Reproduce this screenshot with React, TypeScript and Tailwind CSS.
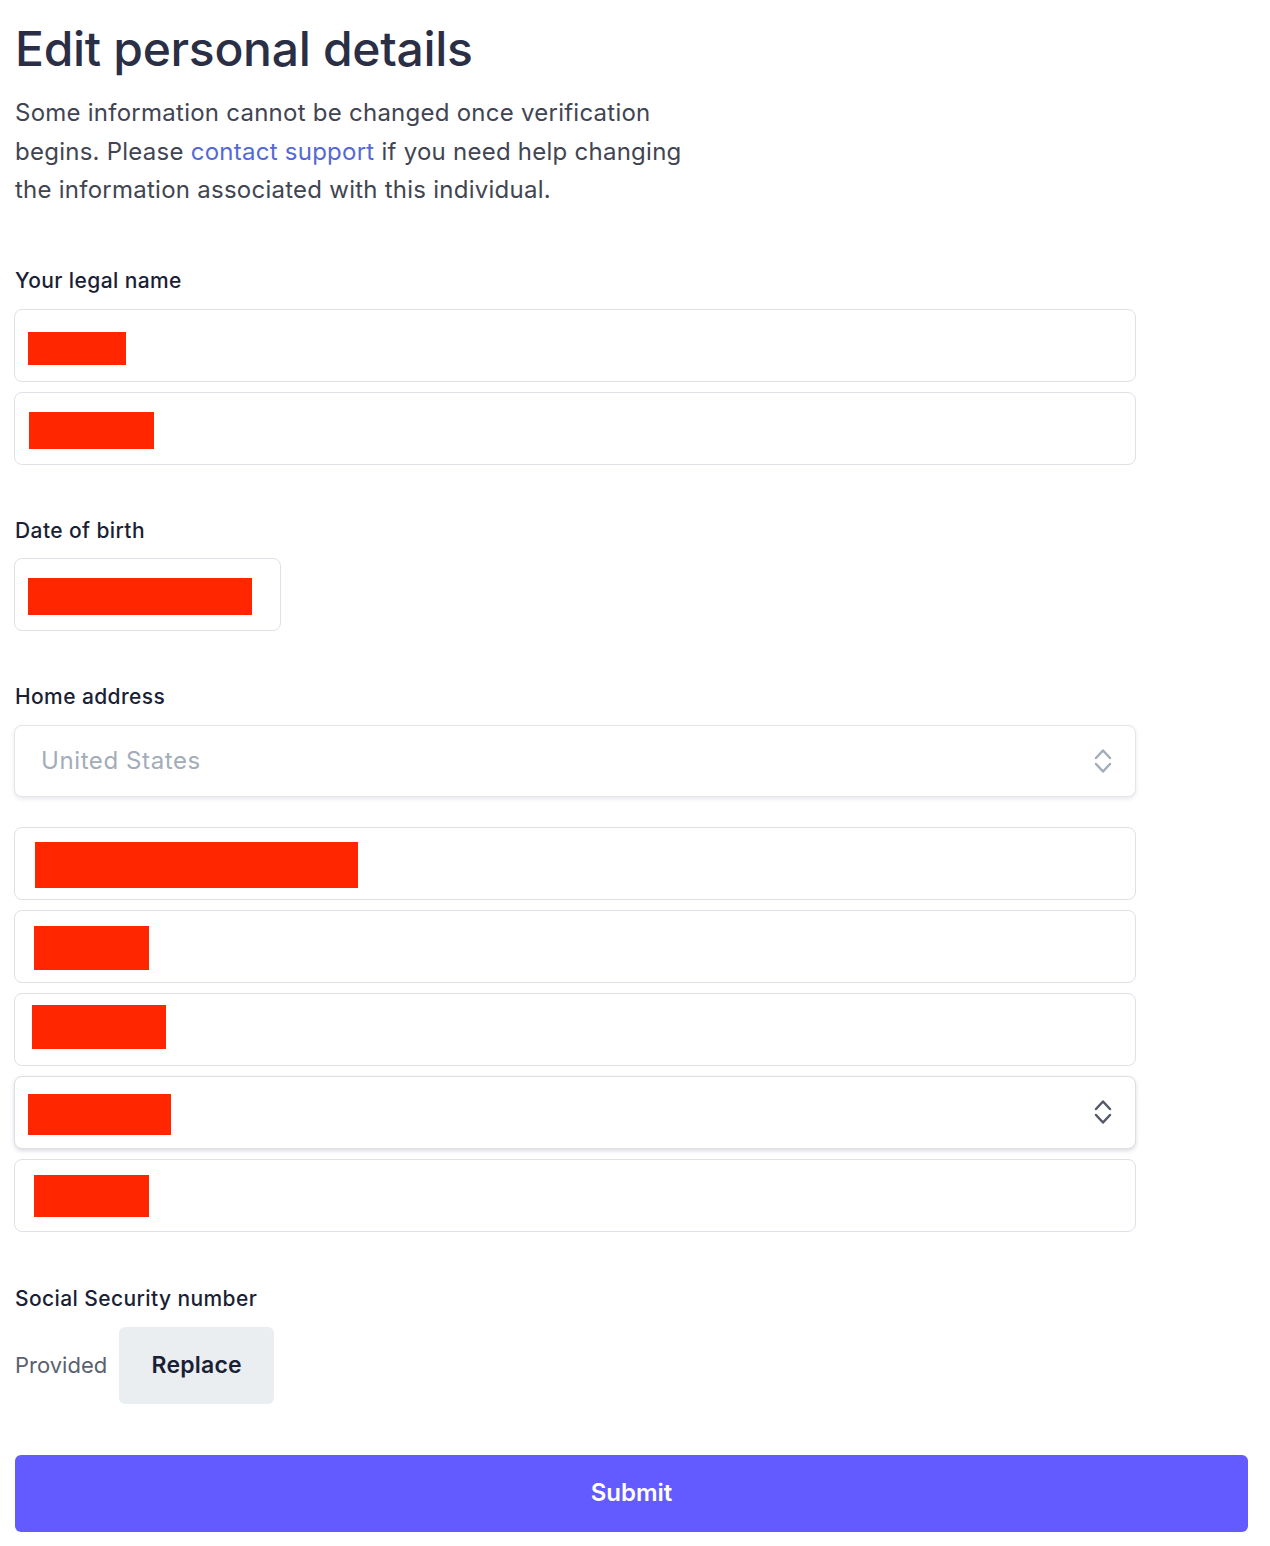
import { useState } from "react";

const Redacted = ({ className }: { className: string }) => (
    <div className={`bg-[#ff2600] shrink-0 ${className}`} />
);

const Chevrons = ({ className }: { className: string }) => (
    <svg width="20" height="30" viewBox="0 0 20 30" fill="none" className={className}>
        <path d="M3 12 L10 4.5 L17 12" stroke="currentColor" strokeWidth="2.5" strokeLinecap="round" strokeLinejoin="round" />
        <path d="M3 18 L10 25.5 L17 18" stroke="currentColor" strokeWidth="2.5" strokeLinecap="round" strokeLinejoin="round" />
    </svg>
);

const Field = ({ children, className = "" }: { children?: React.ReactNode; className?: string }) => (
    <div className={`h-[73px] flex items-start rounded-lg border border-[#dfe1e7] bg-white ${className}`}>
        {children}
    </div>
);

const Label = ({ children }: { children: React.ReactNode }) => (
    <div className="text-[21px] leading-[28px] font-medium tracking-[0.4px] text-[#1a1f36]">{children}</div>
);

export default function App() {
    const [country] = useState("United States");

    return (
        <div className="min-h-screen bg-white pl-[15px] pr-[22px] pt-[20px] pb-4 font-['Inter',sans-serif] antialiased">
            <h1 className="text-[48px] leading-[58px] font-medium text-[#2a2f45] tracking-[-0.3px]">
                Edit personal details
            </h1>
            <p className="mt-[16px] max-w-[700px] text-[24px] leading-[38.5px] tracking-[0.25px] text-[#414552]">
                Some information cannot be changed once verification begins. Please{" "}
                <a href="#" className="text-[#5469d4]">contact support</a> if you need help changing the information
                associated with this individual.
            </p>

            <form className="mt-[57px] flex flex-col" onSubmit={(e) => e.preventDefault()}>
                <div className="w-[1122px] -ml-px">
                    <div className="pl-px">
                        <Label>Your legal name</Label>
                    </div>
                    <div className="mt-[14px] flex flex-col gap-[10px]">
                        <Field>
                            <Redacted className="ml-[13px] mt-[22px] w-[98px] h-[33px]" />
                        </Field>
                        <Field>
                            <Redacted className="ml-[14px] mt-[19px] w-[125px] h-[37px]" />
                        </Field>
                    </div>

                    <div className="mt-[52px] pl-px">
                        <Label>Date of birth</Label>
                    </div>
                    <Field className="mt-[13px] w-[267px]">
                        <Redacted className="ml-[13px] mt-[19px] w-[224px] h-[37px]" />
                    </Field>

                    <div className="mt-[52px] pl-px">
                        <Label>Home address</Label>
                    </div>
                    <div className="mt-[14px] h-[72px] flex items-center justify-between rounded-lg border border-[#e3e5ea] bg-white shadow-[0_2px_4px_rgba(60,66,87,0.12)] pl-[26px] pr-[22px]">
                        <span className="text-[24px] tracking-[0.6px] text-[#a3acb9]">{country}</span>
                        <Chevrons className="text-[#a3acb9]" />
                    </div>

                    <div className="mt-[30px] flex flex-col gap-[10px]">
                        <Field>
                            <Redacted className="ml-[20px] mt-[14px] w-[323px] h-[46px]" />
                        </Field>
                        <Field>
                            <Redacted className="ml-[19px] mt-[15px] w-[115px] h-[44px]" />
                        </Field>
                        <Field>
                            <Redacted className="ml-[17px] mt-[11px] w-[134px] h-[44px]" />
                        </Field>
                        <div className="h-[73px] flex items-start justify-between rounded-lg border border-[#dcdee4] bg-white shadow-[0_2px_4px_rgba(60,66,87,0.18)] pr-[22px]">
                            <Redacted className="ml-[13px] mt-[17px] w-[143px] h-[41px]" />
                            <div className="self-center">
                                <Chevrons className="text-[#545969]" />
                            </div>
                        </div>
                        <Field>
                            <Redacted className="ml-[19px] mt-[15px] w-[115px] h-[42px]" />
                        </Field>
                    </div>

                    <div className="mt-[53px] pl-px">
                        <Label>Social Security number</Label>
                    </div>
                    <div className="mt-[14px] pl-px flex items-center gap-[12px]">
                        <span className="text-[22px] text-[#596171]">Provided</span>
                        <button
                            type="button"
                            className="h-[77px] w-[155px] rounded-md bg-[#ebeef1] text-[23px] font-semibold tracking-[0.2px] text-[#1a1f36]"
                        >
                            Replace
                        </button>
                    </div>
                </div>

                <button
                    type="submit"
                    className="mt-[51px] h-[77px] w-full rounded-md bg-[#635bff] text-[24px] font-semibold text-white"
                >
                    Submit
                </button>
            </form>
        </div>
    );
}
